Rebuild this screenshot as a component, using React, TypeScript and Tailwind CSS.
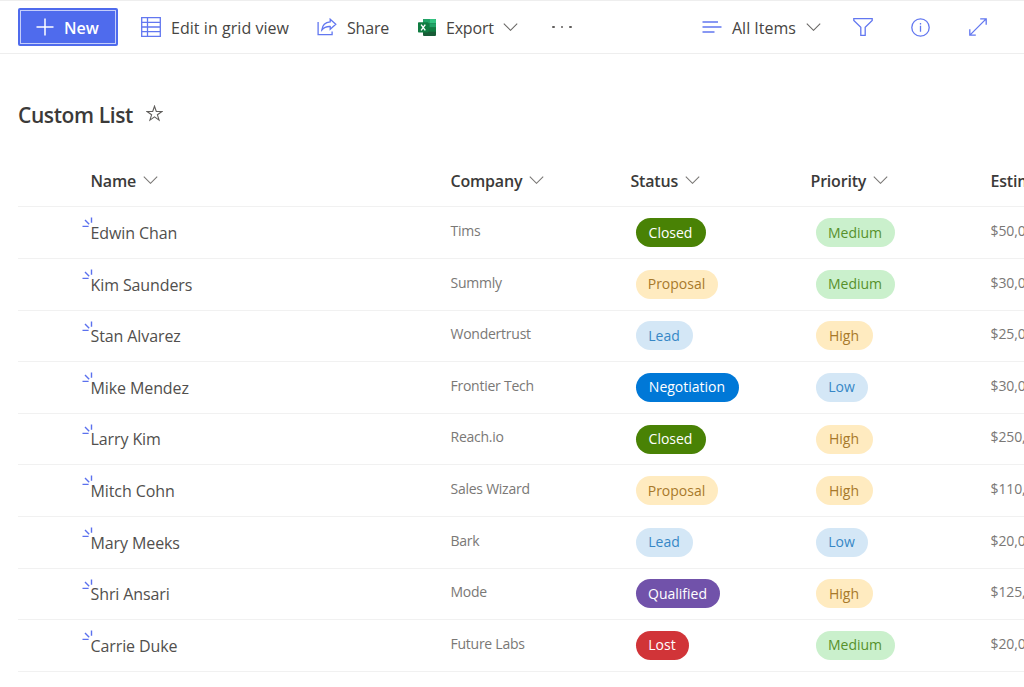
import clsx from 'clsx';
import type { ReactNode } from 'react';

type Status = 'Closed' | 'Proposal' | 'Lead' | 'Negotiation' | 'Qualified' | 'Lost';
type Priority = 'Low' | 'Medium' | 'High';

interface ListItem {
  name: string;
  company: string;
  status: Status;
  priority: Priority;
  value: string;
}

const items: ListItem[] = [
  { name: 'Edwin Chan', company: 'Tims', status: 'Closed', priority: 'Medium', value: '$50,000' },
  { name: 'Kim Saunders', company: 'Summly', status: 'Proposal', priority: 'Medium', value: '$30,000' },
  { name: 'Stan Alvarez', company: 'Wondertrust', status: 'Lead', priority: 'High', value: '$25,000' },
  { name: 'Mike Mendez', company: 'Frontier Tech', status: 'Negotiation', priority: 'Low', value: '$30,000' },
  { name: 'Larry Kim', company: 'Reach.io', status: 'Closed', priority: 'High', value: '$250,000' },
  { name: 'Mitch Cohn', company: 'Sales Wizard', status: 'Proposal', priority: 'High', value: '$110,000' },
  { name: 'Mary Meeks', company: 'Bark', status: 'Lead', priority: 'Low', value: '$20,000' },
  { name: 'Shri Ansari', company: 'Mode', status: 'Qualified', priority: 'High', value: '$125,000' },
  { name: 'Carrie Duke', company: 'Future Labs', status: 'Lost', priority: 'Medium', value: '$20,000' },
];

const pillStyles: Record<Status | Priority, string> = {
  Closed: 'w-[70px] bg-[#498205] text-white',
  Proposal: 'w-[82px] bg-[#ffebc0] text-[#a8792a]',
  Lead: 'w-[57px] bg-[#d4e7f6] text-[#3787c6]',
  Negotiation: 'w-[103px] bg-[#0078d7] text-white',
  Qualified: 'w-[84px] bg-[#7152aa] text-white',
  Lost: 'w-[53px] bg-[#d13438] text-white',
  Low: 'w-[52px] bg-[#d4e7f6] text-[#3787c6]',
  Medium: 'w-[79px] bg-[#caf0cc] text-[#57912b]',
  High: 'w-[57px] bg-[#ffebc0] text-[#a8792a]',
};

function Pill({ label }: { label: Status | Priority }) {
  return (
    <span
      className={clsx(
        'ml-[5px] flex h-[29px] items-center justify-center rounded-full pb-px text-[14px] whitespace-nowrap',
        pillStyles[label],
      )}
    >
      {label}
    </span>
  );
}

function Chevron({ className }: { className?: string }) {
  return (
    <svg className={clsx('h-2 w-[15px] shrink-0', className)} viewBox="0 0 15 8" fill="none" stroke="currentColor">
      <path d="M.8.7 7.5 7.3 14.2.7" strokeWidth="1.1" />
    </svg>
  );
}

function GridIcon() {
  return (
    <svg className="size-5" viewBox="0 0 20 20" fill="none" stroke="#6277f0" strokeWidth="1.3">
      <path d="M.7.7h18.6v18.6H.7zM6.5.7v18.6M.7 5.3h18.6M.7 10h18.6M.7 14.7h18.6" />
    </svg>
  );
}

function ShareIcon() {
  return (
    <svg className="h-[18px] w-5" viewBox="0 0 20 18" fill="none" stroke="#6277f0" strokeWidth="1.3">
      <path d="M1.1 4v12.7h14v-3.2" />
      <path d="M13.2 1.2 18.8 6.3l-5.6 5V8.5C9.6 8.3 7 9.4 4.8 12 5.3 7.4 8.2 4.2 13.2 3.8z" />
    </svg>
  );
}

function ExcelIcon() {
  return (
    <svg className="h-[17px] w-[18px]" viewBox="0 0 18 17">
      <rect x="5" width="13" height="17" rx="1" fill="#185c37" />
      <path d="M5 4.2h6.5v8.5H5z" fill="#107c41" />
      <path d="M6 0h5.5v4.3H5V1a1 1 0 0 1 1-1z" fill="#21a366" />
      <path d="M11.5 0H17a1 1 0 0 1 1 1v3.3h-6.5z" fill="#33c481" />
      <path d="M11.5 4.3H18v4.2h-6.5z" fill="#21a366" />
      <path d="M11.5 8.5H18v4.2h-6.5z" fill="#107c41" />
      <rect y="3.2" width="10.4" height="10.4" rx=".8" fill="#107c41" />
      <path d="m3.1 5.7 4.2 5.6M7.3 5.7 3.1 11.3" stroke="#fff" strokeWidth="1.4" />
    </svg>
  );
}

function FilterIcon() {
  return (
    <svg className="h-[18px] w-5" viewBox="0 0 20 18" fill="none" stroke="#6277f0" strokeWidth="1.3">
      <path d="M.8.7h18.4v1.8l-7 6.8v8H7.8v-8l-7-6.8z" />
    </svg>
  );
}

function InfoIcon() {
  return (
    <svg className="size-[19px]" viewBox="0 0 19 19" fill="none" stroke="#6277f0" strokeWidth="1.3">
      <circle cx="9.5" cy="9.5" r="8.7" />
      <path d="M9.5 7.8v6M9.5 5v1.5" />
    </svg>
  );
}

function ExpandIcon() {
  return (
    <svg className="size-[18px]" viewBox="0 0 18 18" fill="none" stroke="#6277f0" strokeWidth="1.3">
      <path d="M.9 17.1 17.1.9M11.2.8h6v6M.8 11.2v6h6" />
    </svg>
  );
}

// Three short rays shown at the corner of a freshly added item
function NewItemMark() {
  return (
    <svg className="absolute -left-[9px] -top-[4px] h-[11px] w-[11px]" viewBox="0 0 11 11" stroke="#5b71ee" strokeWidth="1.4">
      <path d="M9.5.5v5.3M3 3l4.2 4.2M.5 9.4H6.6" />
    </svg>
  );
}

function ColumnHeader({ children }: { children: ReactNode }) {
  return (
    <div className="flex items-center whitespace-nowrap">
      <span>{children}</span>
      <Chevron className="ml-[7px] -translate-y-px text-[#7a7876]" />
    </div>
  );
}

function CommandBar() {
  return (
    <header className="flex h-[54px] items-center border-t border-b border-[#eeeeee] pl-[18px] text-[16px] tracking-[-0.2px] text-[#474543]">
      <button className="flex h-[38px] w-[100px] shrink-0 rounded-[2px] bg-[#4f6bed] p-[2px] text-white">
        <span className="flex h-full w-full items-center border border-[#c5cefa] pl-[15px] font-semibold">
          <svg className="mr-[10px] size-[18px]" viewBox="0 0 18 18" stroke="currentColor" strokeWidth="1.5">
            <path d="M9 .5v17M.5 9h17" />
          </svg>
          <span className="pt-px tracking-normal">New</span>
        </span>
      </button>
      <button className="ml-[23px] flex w-[176px] shrink-0 items-center gap-[10px] whitespace-nowrap">
        <GridIcon />
        <span className="pt-px tracking-[0.05px]">Edit in grid view</span>
      </button>
      <button className="flex w-[101px] shrink-0 items-center gap-[10px]">
        <ShareIcon />
        <span className="pt-px">Share</span>
      </button>
      <button className="flex w-[134px] shrink-0 items-center">
        <ExcelIcon />
        <span className="ml-[10px] pt-px">Export</span>
        <Chevron className="ml-[9px] text-[#6a6866]" />
      </button>
      <button className="flex w-[150px] shrink-0 items-center gap-[6px]" aria-label="More">
        <span className="size-[2.5px] rounded-full bg-[#605e5c]" />
        <span className="size-[2.5px] rounded-full bg-[#605e5c]" />
        <span className="size-[2.5px] rounded-full bg-[#605e5c]" />
      </button>
      <button className="flex w-[151px] shrink-0 items-center whitespace-nowrap">
        <svg className="h-3 w-5" viewBox="0 0 20 12" stroke="#6277f0" strokeWidth="1.4">
          <path d="M.5 1h15.5M.5 6h19M.5 11h12" />
        </svg>
        <span className="ml-[10px] pt-px tracking-normal">All Items</span>
        <Chevron className="ml-[10px] text-[#6a6866]" />
      </button>
      <button className="w-[58px] shrink-0" aria-label="Filter"><FilterIcon /></button>
      <button className="w-[58px] shrink-0" aria-label="Details"><InfoIcon /></button>
      <button className="shrink-0" aria-label="Expand"><ExpandIcon /></button>
    </header>
  );
}

const rowGrid = 'grid w-[1153px] grid-cols-[360px_180px_180px_180px_180px] border-b border-[#f1f1f1] pl-[72.5px]';

export default function App() {
  return (
    <div className="h-[687px] w-full overflow-hidden bg-white font-['Open_Sans','Noto_Sans',sans-serif]">
      <CommandBar />
      <main className="pl-[18px]">
        <div className="flex h-[101px] items-center pt-[20px]">
          <h1 className="pt-[2px] text-[21px] font-semibold tracking-[-0.4px] text-[#3b3a39]">Custom List</h1>
          <svg className="ml-[13px] size-[17px] -translate-y-px" viewBox="0 0 17 17" fill="none" stroke="#605e5c" strokeWidth="1.1">
            <path d="m8.5 1.2 1.8 5.3h5.6l-4.5 3.3 1.7 5.4-4.6-3.3-4.6 3.3 1.7-5.4L1.1 6.5h5.6z" />
          </svg>
        </div>
        <div className={clsx(rowGrid, 'h-[52.4px] items-center text-[16px] font-semibold tracking-[-0.2px] text-[#3b3a39]')}>
          <ColumnHeader>Name</ColumnHeader>
          <ColumnHeader>Company</ColumnHeader>
          <ColumnHeader>Status</ColumnHeader>
          <ColumnHeader>Priority</ColumnHeader>
          <ColumnHeader>Estimated Value</ColumnHeader>
        </div>
        {items.map((item) => (
          <div key={item.name} className={clsx(rowGrid, 'h-[51.6px] items-center whitespace-nowrap')}>
            <div className="relative pt-[0.5px] text-[16px] leading-[22px] tracking-[-0.1px] text-[#514f4d]">
              <NewItemMark />
              {item.name}
            </div>
            <div className="pb-[4.5px] text-[14px] tracking-[-0.25px] text-[#7a7876]">{item.company}</div>
            <Pill label={item.status} />
            <Pill label={item.priority} />
            <div className="pb-[4.5px] text-[14px] tracking-[-0.1px] text-[#7a7876]">{item.value}</div>
          </div>
        ))}
      </main>
    </div>
  );
}
